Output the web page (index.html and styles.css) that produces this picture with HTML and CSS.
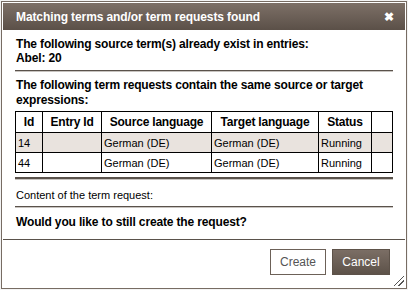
FILE: index.html
```html
<!DOCTYPE html>
<html lang="en">
<head>
    <meta charset="UTF-8">
    <title>Matching terms</title>
    <link rel="stylesheet" href="styles.css">
</head>
<body>

    <div class="dialog">
        <div class="titlebar">
            <span class="title">Matching terms and/or term requests found</span>
            <span class="close">&#10006;</span>
        </div>

        <div class="content">
            <p class="bold">The following source term(s) already exist in entries:<br>Abel: 20</p>
            <hr>
            <p class="bold loose">The following term requests contain the same source or target expressions:</p>

            <table class="requests">
                <colgroup>
                    <col style="width: 27px">
                    <col style="width: 59px">
                    <col style="width: 110px">
                    <col style="width: 107px">
                    <col style="width: 53px">
                    <col>
                </colgroup>
                <tr>
                    <th>Id</th>
                    <th>Entry Id</th>
                    <th>Source language</th>
                    <th>Target language</th>
                    <th>Status</th>
                    <th></th>
                </tr>
                <tr class="odd">
                    <td>14</td>
                    <td></td>
                    <td>German (DE)</td>
                    <td>German (DE)</td>
                    <td>Running</td>
                    <td></td>
                </tr>
                <tr>
                    <td>44</td>
                    <td></td>
                    <td>German (DE)</td>
                    <td>German (DE)</td>
                    <td>Running</td>
                    <td></td>
                </tr>
            </table>

            <hr class="thick">
            <p class="normal">Content of the term request:</p>
            <hr class="mid">
            <p class="bold">Would you like to still create the request?</p>
        </div>

        <div class="footer">
            <button type="button" class="btn-light">Create</button>
            <button type="button" class="btn-dark">Cancel</button>
            <span class="grip"></span>
        </div>
    </div>

</body>
</html>
```

FILE: styles.css
```css
body {
    margin: 0;
    padding: 1px;
    background-color: #f3f3f3;
    font-family: "Liberation Sans", Arial, sans-serif;
}

.dialog {
    width: 406px;
    height: 288px;
    box-sizing: border-box;
    border: 1px solid #776c63;
    padding: 1px;
    background-color: white;
    display: flex;
    flex-direction: column;
    position: relative;
}

.titlebar {
    height: 27px;
    flex: none;
    background: linear-gradient(#7d7067, #5b5048);
    color: white;
    display: flex;
    align-items: center;
    justify-content: space-between;
    padding: 0 11px 0 13px;
}

.title {
    font-size: 12px;
    font-weight: bold;
    letter-spacing: -0.1px;
}

.close {
    font-size: 12px;
    font-weight: bold;
}

.content {
    padding: 7px 12px 0 12px;
    flex: 1;
}

p {
    margin: 0;
    padding-left: 1px;
    color: black;
}

.bold {
    font-size: 12px;
    font-weight: bold;
    line-height: 14px;
    letter-spacing: -0.15px;
}

.bold.loose {
    line-height: 15px;
}

.normal {
    font-size: 11px;
    line-height: 14px;
    margin: 8px 0 0;
}

hr {
    border: none;
    border-top: 1px solid #5a524b;
    border-bottom: 1px solid #c8c4c0;
    margin: 5px 0 6px;
    height: 0;
}

hr.mid {
    margin: 4px 0 7px;
}

hr.thick {
    border-top: 2px solid #5a524b;
    margin: 4px 0 0;
}

.requests {
    width: 100%;
    table-layout: fixed;
    border-collapse: collapse;
    margin-top: 3px;
    font-size: 11px;
}

.requests th,
.requests td {
    border: 1px solid black;
    height: 19px;
    padding: 0 2px;
    text-align: left;
    white-space: nowrap;
}

.requests th {
    height: 20px;
    text-align: center;
    font-size: 12px;
    letter-spacing: -0.2px;
}

.requests tr.odd td {
    background-color: #e9e3de;
}

.footer {
    border-top: 1px solid #5a524b;
    box-sizing: border-box;
    height: 48px;
    flex: none;
    display: flex;
    justify-content: flex-end;
    align-items: flex-start;
    gap: 6px;
    padding: 9px 15px 0 0;
}

.footer button {
    height: 26px;
    font-family: "Liberation Sans", Arial, sans-serif;
    font-size: 12px;
    padding: 0;
    cursor: pointer;
}

.btn-light {
    width: 56px;
    background-color: white;
    border: 1px solid #6c6158;
    color: #555;
}

.btn-dark {
    width: 58px;
    background: linear-gradient(#7b6e65, #5d5249);
    border: 1px solid #5d5249;
    color: white;
}

.grip {
    position: absolute;
    right: 2px;
    bottom: 2px;
    width: 10px;
    height: 10px;
    background: linear-gradient(135deg, transparent 45%, #555 45%, #555 52%, transparent 52%, transparent 68%, #555 68%, #555 75%, transparent 75%);
}
```
